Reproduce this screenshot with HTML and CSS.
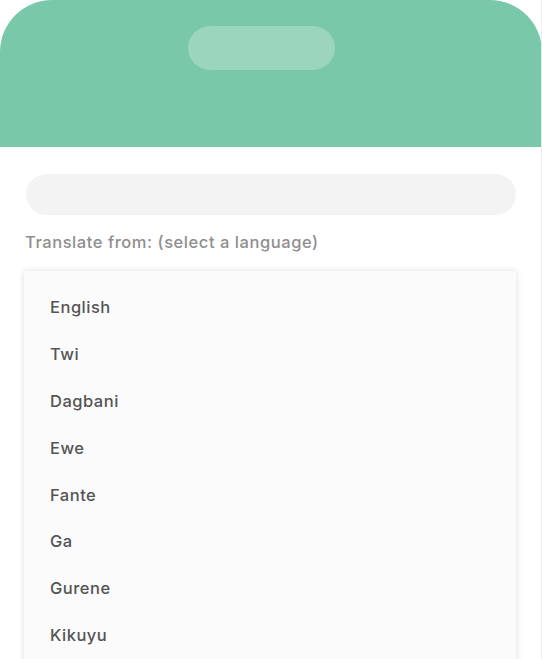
FILE: index.html
```html
<!DOCTYPE html>
<html>
<head>
<meta charset="utf-8">
<link rel="stylesheet" href="styles.css">
</head>
<body>
<div class="screen">
  <header class="header">
    <div class="pill"></div>
  </header>
  <main class="content">
    <div class="search"></div>
    <div class="label">Translate from: (select a language)</div>
    <ul class="menu">
      <li>English</li>
      <li>Twi</li>
      <li>Dagbani</li>
      <li>Ewe</li>
      <li>Fante</li>
      <li>Ga</li>
      <li>Gurene</li>
      <li>Kikuyu</li>
    </ul>
  </main>
</div>
</body>
</html>
```
FILE: styles.css
```css
html, body {
  margin: 0;
  padding: 0;
  background: #ffffff;
  overflow: hidden;
}
.screen {
  width: 542px;
  height: 659px;
  overflow: hidden;
  font-family: Inter, "Noto Sans", sans-serif;
  box-sizing: border-box;
  border-right: 1px solid #ececec;
}
.header {
  height: 147px;
  background: #79c8a9;
  border-radius: 52px 52px 0 0;
  display: flex;
  justify-content: center;
  padding: 26px 20px 0 0;
  box-sizing: border-box;
  margin-right: -1px;
}
.pill {
  width: 147px;
  height: 44px;
  border-radius: 22px;
  background: #9ad5bc;
}
.content {
  padding: 27px 25px 0 24px;
}
.search {
  height: 41px;
  border-radius: 21px;
  background: #f3f3f3;
  margin-left: 2px;
}
.label {
  margin-top: 17px;
  margin-left: 1px;
  font-size: 16.5px;
  font-weight: 500;
  letter-spacing: 0.55px;
  color: #8e8e8e;
  line-height: 20px;
}
.menu {
  list-style: none;
  margin: 19px 0 0 0;
  padding: 13px 0 60px 26px;
  background: #fbfbfb;
  box-shadow: 0 0 6px rgba(0, 0, 0, 0.14);
}
.menu li {
  height: 46.8px;
  display: flex;
  align-items: center;
  font-size: 16.5px;
  font-weight: 500;
  letter-spacing: 0.5px;
  color: #545454;
}
```
